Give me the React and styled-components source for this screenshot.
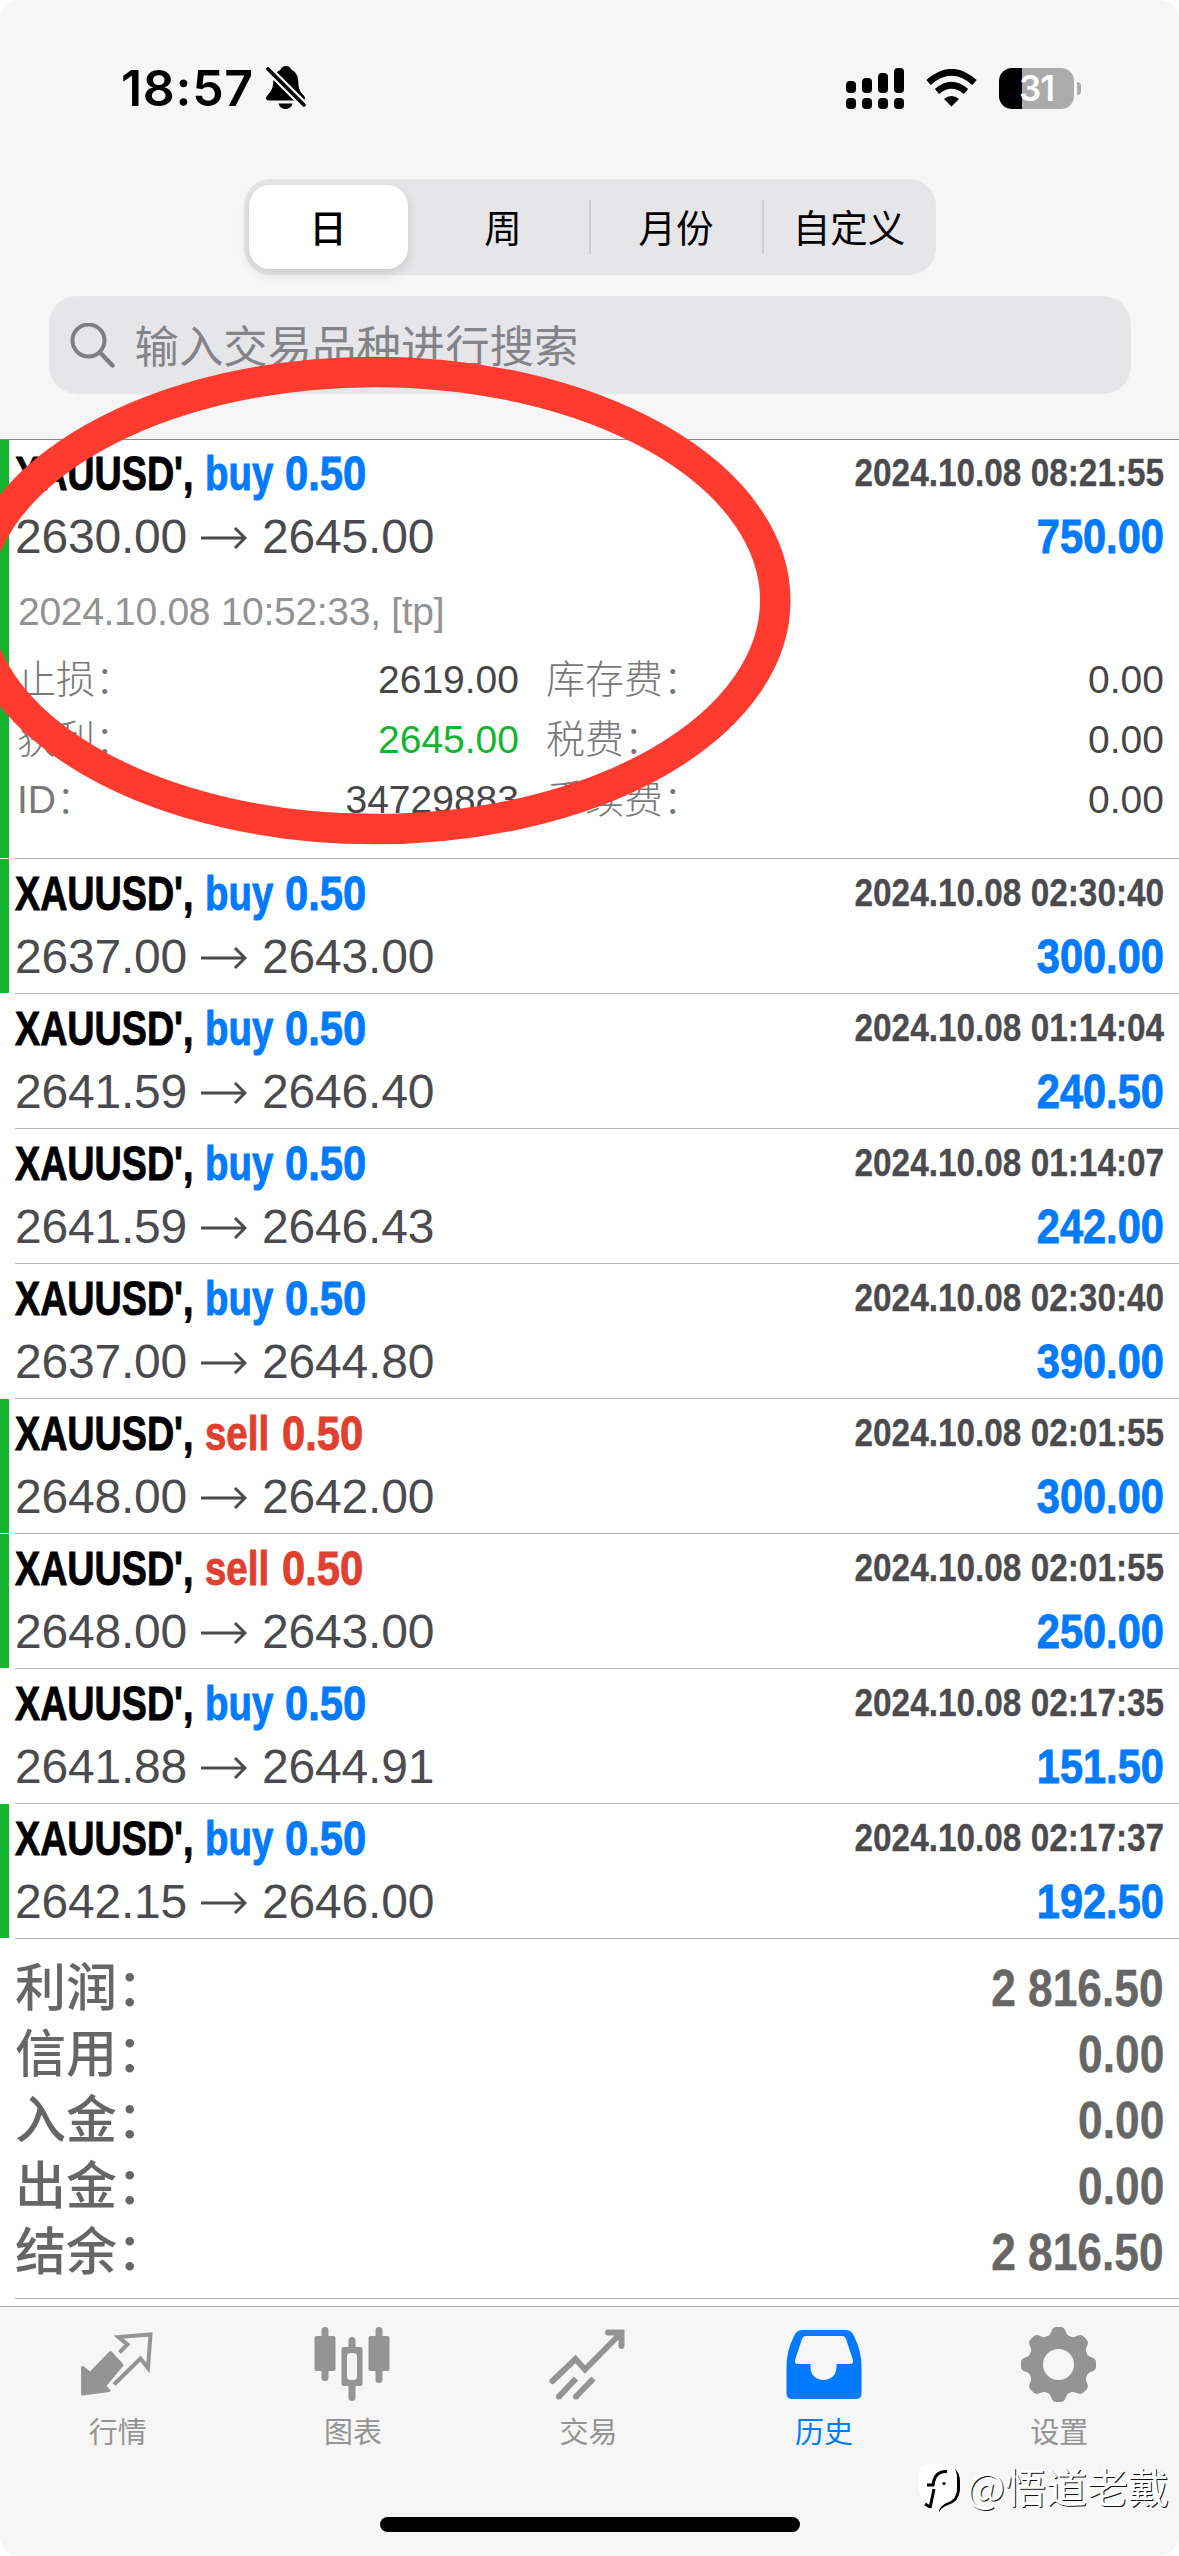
import { useState } from "react";
import styled, { createGlobalStyle } from "styled-components";

const BLUE = "#007aff";
const RED = "#e0402f";
const GREEN = "#14b52e";

const GlobalStyle = createGlobalStyle`
  body {
    margin: 0;
    background: #fff;
    font-family: "Liberation Sans", "Noto Sans CJK SC", sans-serif;
  }

  * {
    box-sizing: border-box;
  }
`;

const Screen = styled.div`
  position: relative;
  display: flex;
  flex-direction: column;
  width: 1179px;
  height: 2556px;
  background: #fff;
  border-radius: 20px;
  overflow: hidden;
`;

const Header = styled.header`
  display: flex;
  flex-direction: column;
  align-items: center;
  height: 440px;
  background: #f6f6f6;
  border-bottom: 1px solid #86868b;
`;

const StatusBar = styled.div`
  display: flex;
  align-items: center;
  width: 100%;
  height: 179px;
  padding: 0 98px 3px 121px;
`;

const Clock = styled.span`
  font-family: "Inter", sans-serif;
  font-size: 50px;
  font-weight: 600;
  line-height: 60px;
  letter-spacing: 0.7px;
  width: 145px;
  white-space: nowrap;
`;

const StatusIcons = styled.div`
  display: flex;
  align-items: center;
  margin-left: auto;
  gap: 22px;
`;

const Battery = styled.div`
  display: flex;
  align-items: center;
  gap: 3px;
`;

const BatteryBody = styled.div`
  width: 75px;
  height: 41px;
  border-radius: 13px;
  background: linear-gradient(to right, #000 31%, #ababab 31%);
  color: #fff;
  font-family: "Inter", sans-serif;
  font-size: 35px;
  font-weight: 600;
  line-height: 41px;
  text-align: center;
  letter-spacing: -1px;
`;

const BatteryCap = styled.div`
  width: 4px;
  height: 13px;
  border-radius: 0 4px 4px 0;
  background: #ababab;
`;

const Segments = styled.div`
  display: flex;
  width: 692px;
  height: 96px;
  padding: 6px 0 6px 5px;
  border-radius: 27px;
  background: #e6e6e8;
`;

const Segment = styled.button`
  display: flex;
  align-items: center;
  justify-content: center;
  width: ${(props) => (props.$active ? "160px" : "174px")};
  height: 84px;
  margin-right: ${(props) => (props.$active ? "9px" : "0")};
  padding: 0 0 4px;
  border: none;
  border-radius: 21px;
  background: ${(props) => (props.$active ? "#fff" : "transparent")};
  box-shadow: ${(props) =>
    props.$active ? "0 4px 12px rgba(0, 0, 0, 0.12)" : "none"};
  color: #000;
  font-family: inherit;
  font-size: 37.5px;
  font-weight: ${(props) => (props.$active ? 500 : 400)};
`;

const SegmentDivider = styled.div`
  width: 2px;
  height: 54px;
  margin: 15px -1px 0;
  background: #cfcfd2;
`;

const SearchField = styled.div`
  display: flex;
  align-items: center;
  width: 1082px;
  height: 98px;
  margin-top: 21px;
  padding-left: 21px;
  border-radius: 28px;
  background: #e6e6e8;
`;

const Placeholder = styled.span`
  margin-left: 20px;
  padding-bottom: 4px;
  color: #848488;
  font-size: 44.4px;
`;

const DealRow = styled.div`
  position: relative;
  height: ${(props) => (props.$open ? "419px" : "135px")};
  padding: ${(props) => (props.$open ? "2px" : "3px")} 15px 0 15px;

  /* divider starts after the left inset */
  &::after {
    content: "";
    position: absolute;
    left: 15px;
    right: 0;
    bottom: 0;
    height: 1px;
    background: #b8b8bc;
  }

  /* marker for deals closed by take profit */
  &::before {
    content: "";
    display: ${(props) => (props.$closed ? "block" : "none")};
    position: absolute;
    left: 0;
    top: 0;
    bottom: 1px;
    width: 9px;
    background: ${GREEN};
  }
`;

const Line = styled.div`
  display: flex;
  justify-content: space-between;
  height: 63px;
`;

const DealTitle = styled.div`
  display: flex;
`;

// Bold text squeezed horizontally to get a condensed face
const Condensed = styled.span`
  display: inline-block;
  width: ${(props) => props.$width || "auto"};
  color: ${(props) => props.$color || "#000"};
  font-size: 48px;
  font-weight: 700;
  line-height: 63px;
  white-space: nowrap;
  -webkit-text-stroke: 0.9px currentColor;
  transform: scaleX(${(props) => props.$scale});
  transform-origin: ${(props) => props.$origin || "left"} center;
`;

const DealTime = styled(Condensed)`
  font-size: 39px;
  line-height: 61px;
  -webkit-text-stroke-width: 0.3px;
`;

const Prices = styled.div`
  display: flex;
  align-items: center;
  color: #4b4b4f;
  font-size: 48px;
  line-height: 63px;
  letter-spacing: -0.2px;
`;

const PriceArrow = styled.svg`
  width: 46px;
  height: 26px;
  margin: 3px 15px 0 14px;
`;

const Comment = styled.div`
  margin-top: 14px;
  padding-left: 3px;
  color: #929294;
  font-size: 39px;
  line-height: 60px;
  letter-spacing: -0.3px;
`;

const Details = styled.div`
  display: grid;
  grid-template-columns: 150px 352px 200px 1fr;
  grid-auto-rows: 60px;
  margin-top: 8px;
  padding-left: 2px;
  font-size: 39px;
  line-height: 60px;
`;

const DetailLabel = styled.span`
  color: #78787a;
  font-weight: 300;
  padding-left: ${(props) => (props.$second ? "27px" : "0")};
  white-space: nowrap;
`;

const DetailValue = styled.span`
  color: ${(props) => props.$color || "#464649"};
  text-align: right;
`;

const Summary = styled.div`
  height: 360px;
  margin-left: 15px;
  padding: 17px 15px 0 0;
  border-bottom: 1px solid #b8b8bc;
`;

const SummaryRow = styled.div`
  display: flex;
  justify-content: space-between;
  height: 66px;
  color: #666;
  font-size: 51px;
  font-weight: 500;
  line-height: 66px;
`;

const SummaryValue = styled(Condensed)`
  font-size: 51px;
  line-height: 66px;
  -webkit-text-stroke-width: 0.4px;
`;

const TabBar = styled.nav`
  display: grid;
  grid-template-columns: repeat(5, 1fr);
  height: 250px;
  margin-top: auto;
  padding-right: 2px;
  border-top: 1px solid #a9a9ac;
  background: #f6f6f6;
`;

const Tab = styled.div`
  display: flex;
  flex-direction: column;
  align-items: center;
  padding-top: 15px;
  color: ${(props) => (props.$active ? BLUE : "#949494")};
  font-size: 29px;
  line-height: 40px;

  svg {
    width: 84px;
    height: 84px;
    margin-bottom: 7px;
  }
`;

const HomeIndicator = styled.div`
  position: absolute;
  left: 380px;
  bottom: 24px;
  width: 420px;
  height: 15px;
  border-radius: 8px;
  background: #000;
`;

const Watermark = styled.div`
  position: absolute;
  right: 10px;
  bottom: 42px;
  display: flex;
  align-items: center;
  gap: 5px;
  color: #fff;
  font-family: "Noto Sans CJK SC", sans-serif;
  font-size: 41px;
  line-height: 50px;
  text-shadow: 1px 1px 0 #111;
`;

const WatermarkName = styled.span`
  padding-bottom: 4px;
`;

const Marker = styled.svg`
  position: absolute;
  left: 0;
  top: 340px;
  width: 820px;
  height: 520px;
`;

const segments = ["日", "周", "月份", "自定义"];

const deals = [
  { side: "buy", from: "2630.00", to: "2645.00", time: "2024.10.08 08:21:55", profit: "750.00", closed: true, open: true },
  { side: "buy", from: "2637.00", to: "2643.00", time: "2024.10.08 02:30:40", profit: "300.00", closed: true },
  { side: "buy", from: "2641.59", to: "2646.40", time: "2024.10.08 01:14:04", profit: "240.50" },
  { side: "buy", from: "2641.59", to: "2646.43", time: "2024.10.08 01:14:07", profit: "242.00" },
  { side: "buy", from: "2637.00", to: "2644.80", time: "2024.10.08 02:30:40", profit: "390.00" },
  { side: "sell", from: "2648.00", to: "2642.00", time: "2024.10.08 02:01:55", profit: "300.00", closed: true },
  { side: "sell", from: "2648.00", to: "2643.00", time: "2024.10.08 02:01:55", profit: "250.00", closed: true },
  { side: "buy", from: "2641.88", to: "2644.91", time: "2024.10.08 02:17:35", profit: "151.50" },
  { side: "buy", from: "2642.15", to: "2646.00", time: "2024.10.08 02:17:37", profit: "192.50", closed: true },
];

const summary = [
  ["利润：", "2 816.50"],
  ["信用：", "0.00"],
  ["入金：", "0.00"],
  ["出金：", "0.00"],
  ["结余：", "2 816.50"],
];

const BellOff = () => (
  <svg width="40" height="44" viewBox="0 0 40 44">
    <path
      d="M20 0c-3 0-5 2-5.600 4C10 6 7.500 10 7.300 15c-.2 6-1.300 9-4.300 12.500C1 30 0 31 0 32c0 1.500 1 2.500 3 2.500h33c2 0 3-1 3-2.500 0-1-1-2-3-4.500-3-3.500-3.500-6.500-3.800-12.500C32 10 30 6 25.600 4 25 2 23 0 20 0z"
      fill="#000"
    />
    <path d="M12.500 37.500h14c-.5 3-3.500 5.500-7 5.500s-6.500-2.500-7-5.500z" fill="#000" />
    <path d="M0 1l39 39" stroke="#f6f6f6" strokeWidth="8" />
    <path d="M2 3l36 36" stroke="#000" strokeWidth="3.600" strokeLinecap="round" />
  </svg>
);

const Signal = () => (
  <svg width="58" height="41" viewBox="0 0 58 41">
    {[13, 10, 5, 0].map((top, i) => (
      <g key={top}>
        <rect x={i * 16} y={top} width="10" height={25 - top} rx="4" />
        <rect x={i * 16} y="30" width="10" height="11" rx="4" />
      </g>
    ))}
  </svg>
);

const Wifi = () => (
  <svg width="51" height="38" viewBox="0 0 51 38">
    <path d="M25.500 37.500L18 30q7.500-6 15 0z" />
    <path d="M11 22.500q14.500-12.500 29 0" fill="none" stroke="#000" strokeWidth="6.500" />
    <path d="M2.500 13.500q23-20.500 46 0" fill="none" stroke="#000" strokeWidth="6.500" />
  </svg>
);

const SearchIcon = () => (
  <svg width="45" height="45" viewBox="0 0 45 45" fill="none" stroke="#7f7f83">
    <circle cx="18.500" cy="17.500" r="16" strokeWidth="4" />
    <path d="M30 29.500l12.500 13" strokeWidth="4.500" strokeLinecap="round" />
  </svg>
);

const Arrow = () => (
  <PriceArrow viewBox="0 0 46 26" fill="none" stroke="#4b4b4f" strokeWidth="3">
    <path d="M0 13h44M34 3l10 10-10 10" />
  </PriceArrow>
);

const QuotesIcon = () => (
  <svg viewBox="0 0 84 84" fill="currentColor">
    <path
      d="M6.600 45.500L14 51.500L34.500 30.500L46 43L28.500 64L33 68.500L6.600 72z"
      stroke="currentColor"
      strokeWidth="3"
      strokeLinejoin="round"
    />
    <path
      d="M43.500 30.500L51.500 22.500L42.500 15L74.500 12.500L72 46L64.500 36.500L38 62.500"
      fill="none"
      stroke="currentColor"
      strokeWidth="4"
    />
  </svg>
);

const ChartIcon = () => (
  <svg viewBox="0 0 84 84" fill="currentColor">
    <rect x="3.500" y="14" width="21" height="35" rx="2" />
    <rect x="10.500" y="5" width="7" height="54" rx="3.500" />
    <rect x="57.500" y="14" width="21" height="35" rx="2" />
    <rect x="64.500" y="5" width="7" height="56" rx="3.500" />
    <rect x="37.500" y="15" width="7" height="64" rx="3.500" />
    <rect x="30.500" y="25" width="21" height="39" rx="2" />
    <rect x="36" y="31" width="10" height="27" rx="3.500" fill="#f6f6f6" />
  </svg>
);

const TradeIcon = () => (
  <svg
    viewBox="0 0 84 84"
    fill="none"
    stroke="currentColor"
    strokeWidth="6"
    strokeLinecap="round"
  >
    <path d="M6.500 59L29.500 37L39 47.500L74 12" strokeLinejoin="miter" />
    <path d="M62 10.500h13.500v13.500" />
    <path d="M13 74.500L30 56.500M30 74.500L47.500 56.500" strokeLinecap="butt" />
    <path d="M13 74.500h.1M30 74.500h.1" />
  </svg>
);

const HistoryIcon = () => (
  <svg viewBox="0 0 84 84" fill="currentColor">
    <path
      fillRule="evenodd"
      d="M20 8H64Q69.500 8 72 14Q79.500 29 79.500 44V71Q79.500 77 73.500 77H10.500Q4.500 77 4.500 71V44Q4.500 29 12 14Q14.500 8 20 8ZM24 14Q21 14 20 17L13 38Q12.500 42 16 42H28.500V45C28.500 53 34 58 41.500 58S54.500 53 54.500 45V42H68Q71.500 42 71 38L64 17Q63 14 60 14Z"
    />
  </svg>
);

const SettingsIcon = () => (
  <svg viewBox="0 0 84 84" fill="currentColor">
    {[0, 45, 90, 135, 180, 225, 270, 315].map((angle) => (
      <path
        key={angle}
        d="M27 17Q33 14.500 34.500 9Q36 5 39 5H44Q47 5 48.500 9Q50 14.500 56 17L50 26H33z"
        transform={`rotate(${angle} 41.500 42.500)`}
      />
    ))}
    <circle cx="41.500" cy="42.500" r="23" fill="none" stroke="currentColor" strokeWidth="15" />
  </svg>
);

const WatermarkLogo = () => (
  <svg width="44" height="50" viewBox="0 0 44 50">
    <path d="M22 50Q22 45 29 41Q40 38 40 26V16L38 7Q43 11 43 20V28Q42 40 31 43Q25 45 22 50z" fill="#000" />
    <path d="M14 2H28Q40 3 40 16V26Q40 38 29 41L21 46L15 41Q1 38 1 24V16Q1 3 14 2z" fill="#fff" />
    <path d="M10 23H17M16 24Q17 9 30 9.500M17 27L13 46M8 42l5 3" fill="none" stroke="#000" strokeWidth="3" />
    <circle cx="27" cy="21.500" r="1.600" />
  </svg>
);

const tabs = [
  { name: "行情", Icon: QuotesIcon },
  { name: "图表", Icon: ChartIcon },
  { name: "交易", Icon: TradeIcon },
  { name: "历史", Icon: HistoryIcon },
  { name: "设置", Icon: SettingsIcon },
];

function DealDetails() {
  return (
    <>
      <Comment>2024.10.08 10:52:33, [tp]</Comment>
      <Details>
        <DetailLabel>止损：</DetailLabel>
        <DetailValue>2619.00</DetailValue>
        <DetailLabel $second>库存费：</DetailLabel>
        <DetailValue>0.00</DetailValue>
        <DetailLabel>获利：</DetailLabel>
        <DetailValue $color={GREEN}>2645.00</DetailValue>
        <DetailLabel $second>税费：</DetailLabel>
        <DetailValue>0.00</DetailValue>
        <DetailLabel>ID：</DetailLabel>
        <DetailValue>34729883</DetailValue>
        <DetailLabel $second>手续费：</DetailLabel>
        <DetailValue>0.00</DetailValue>
      </Details>
    </>
  );
}

function Deal({ deal }) {
  const color = deal.side === "buy" ? BLUE : RED;
  return (
    <DealRow $open={deal.open} $closed={deal.closed}>
      <Line>
        <DealTitle>
          <Condensed $width="190px" $scale={0.785}>
            XAUUSD',
          </Condensed>
          <Condensed $width={deal.side === "buy" ? "80px" : "77px"} $scale={0.8} $color={color}>
            {deal.side}
          </Condensed>
          <Condensed $scale={0.87} $color={color}>
            0.50
          </Condensed>
        </DealTitle>
        <DealTime $scale={0.855} $color="#4b4b4f" $origin="right">
          {deal.time}
        </DealTime>
      </Line>
      <Line>
        <Prices>
          {deal.from}
          <Arrow />
          {deal.to}
        </Prices>
        <Condensed $scale={0.865} $color={BLUE} $origin="right">
          {deal.profit}
        </Condensed>
      </Line>
      {deal.open && <DealDetails />}
    </DealRow>
  );
}

export default function App() {
  const [period, setPeriod] = useState(0);

  return (
    <Screen>
      <GlobalStyle />
      <Header>
        <StatusBar>
          <Clock>18:57</Clock>
          <BellOff />
          <StatusIcons>
            <Signal />
            <Wifi />
            <Battery>
              <BatteryBody>31</BatteryBody>
              <BatteryCap />
            </Battery>
          </StatusIcons>
        </StatusBar>
        <Segments>
          {segments.map((name, i) => [
            i > 1 && <SegmentDivider key={"divider" + i} />,
            <Segment key={name} $active={i === period} onClick={() => setPeriod(i)}>
              {name}
            </Segment>,
          ])}
        </Segments>
        <SearchField>
          <SearchIcon />
          <Placeholder>输入交易品种进行搜索</Placeholder>
        </SearchField>
      </Header>

      {deals.map((deal, i) => (
        <Deal key={i} deal={deal} />
      ))}

      <Summary>
        {summary.map(([label, value]) => (
          <SummaryRow key={label}>
            {label}
            <SummaryValue $scale={0.868} $color="#666" $origin="right">
              {value}
            </SummaryValue>
          </SummaryRow>
        ))}
      </Summary>

      <TabBar>
        {tabs.map(({ name, Icon }) => (
          <Tab key={name} $active={name === "历史"}>
            <Icon />
            {name}
          </Tab>
        ))}
      </TabBar>

      <HomeIndicator />
      <Watermark>
        <WatermarkLogo />
        <WatermarkName>@悟道老戴</WatermarkName>
      </Watermark>
      <Marker viewBox="0 340 820 520">
        <ellipse cx="375" cy="600.500" rx="400.300" ry="228.600" fill="none" stroke="#ff3b30" strokeWidth="30.500" />
      </Marker>
    </Screen>
  );
}
